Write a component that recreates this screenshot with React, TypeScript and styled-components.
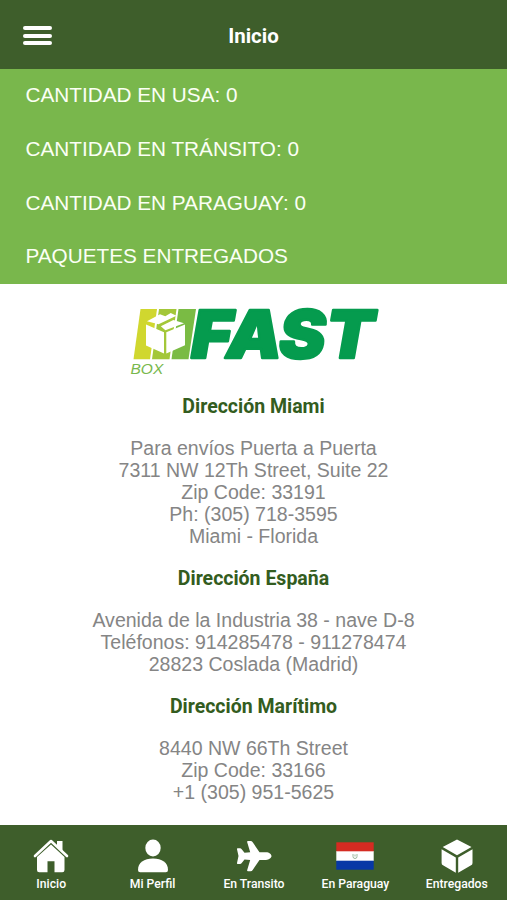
import React from "react";
import styled, { createGlobalStyle } from "styled-components";

const Global = createGlobalStyle`
  *, *::before, *::after { box-sizing: border-box; }
  html, body, #root { height: 100%; }
  body { margin: 0; background: #fff; font-family: "Liberation Sans", Arial, sans-serif; }
`;

const Screen = styled.div`
  display: flex;
  flex-direction: column;
  height: 900px;
  width: 100%;
  overflow: hidden;
`;

const Header = styled.header`
  display: grid;
  grid-template-columns: 74px 1fr 74px;
  align-items: center;
  flex: none;
  height: 69px;
  padding-top: 2px;
  background: #3e5e2b;
`;

const MenuButton = styled.button`
  display: flex;
  flex-direction: column;
  gap: 3.6px;
  width: 29px;
  margin-left: 22.5px;
  padding: 0;
  border: 0;
  background: none;
`;

const MenuBar = styled.span`
  height: 4px;
  border-radius: 2px;
  background: #fff;
`;

const Title = styled.h1`
  margin: 0;
  color: #fff;
  font: 700 20.5px/24px Roboto, sans-serif;
  text-align: center;
`;

const Summary = styled.ul`
  flex: none;
  height: 215px;
  margin: 0;
  padding: 0 0 0 25.4px;
  list-style: none;
  background: #79b74c;
`;

const SummaryItem = styled.li`
  height: 53.8px;
  color: #fbfff5;
  font-size: 20.75px;
  line-height: 52.6px;
`;

const Main = styled.main`
  display: flex;
  flex: 1;
  flex-direction: column;
  align-items: center;
`;

const Logo = styled.svg`
  display: block;
  flex: none;
  width: 265px;
  height: 85px;
  margin: 11px 0 1px;
  overflow: visible;
`;

const Address = styled.section`
  flex: none;
  margin: 14px 0 6px;
  text-align: center;
`;

const Heading = styled.h2`
  margin: 0 0 18px;
  color: #335c20;
  font: 700 19.5px/24px Roboto, sans-serif;
`;

const Line = styled.p`
  margin: 0;
  color: #858585;
  font-size: 19.55px;
  line-height: 22px;
`;

const Tabs = styled.nav`
  display: grid;
  grid-template-columns: repeat(5, 1fr);
  flex: none;
  height: 75px;
  background: #3e5e2b;
`;

const Tab = styled.a`
  display: flex;
  flex-direction: column;
  align-items: center;
  padding: 12px 0 0 1px;
  color: #fff;
  font: 500 12.2px/14px Roboto, sans-serif;
  white-space: nowrap;
`;

const TabIcon = styled.svg`
  width: 40px;
  height: 40px;
  flex: none;
  fill: #fff;
`;

const counts = ["CANTIDAD EN USA: 0", "CANTIDAD EN TRÁNSITO: 0", "CANTIDAD EN PARAGUAY: 0", "PAQUETES ENTREGADOS"];

const addresses = [
  {
    title: "Dirección Miami",
    lines: ["Para envíos Puerta a Puerta", "7311 NW 12Th Street, Suite 22", "Zip Code: 33191", "Ph: (305) 718-3595", "Miami - Florida"],
  },
  {
    title: "Dirección España",
    lines: ["Avenida de la Industria 38 - nave D-8", "Teléfonos: 914285478 - 911278474", "28823 Coslada (Madrid)"],
  },
  {
    title: "Dirección Marítimo",
    lines: ["8440 NW 66Th Street", "Zip Code: 33166", "+1 (305) 951-5625"],
  },
];

const tabs = [
  {
    label: "Inicio",
    icon: (
      <>
        <path d="M4 19 20 4 36 19" fill="none" stroke="#fff" strokeWidth="2.6" strokeLinecap="round" strokeLinejoin="round" />
        <path d="M26 4h5.500v10.500l-5.500-5z" />
        <path d="M20 7.500 33.500 20V33q0 2.200-2.200 2.200H23.500V24.200h-7v11H8.200Q6 35.200 6 33V20z" />
      </>
    ),
  },
  {
    label: "Mi Perfil",
    icon: (
      <>
        <ellipse cx="20" cy="11" rx="7.700" ry="8.400" />
        <path d="M5 33C5 25.500 11 21.500 20 21.500S35 25.500 35 33q0 2.200-2.200 2.200H7.200Q5 35.200 5 33z" />
      </>
    ),
  },
  {
    label: "En Transito",
    icon: (
      <path d="M14 4h2.600q1.300 0 2.100 1.200L25.500 15.300h6.500c3.200 0 5.500 2.100 5.500 3.800S35.200 22.900 32 22.900h-6.500L18.700 33q-.8 1.200-2.100 1.200H14q-1.200 0-.8-1.200l3-10.100-5.700-.4-3 3.800q-.6.600-1.400.600H3.700q-1 0-.7-1l1.500-6.800L3 12.300q-.3-1 .7-1h2.400q.8 0 1.400.6l3 3.800 5.700-.4-3-10.100Q12.800 4 14 4z" />
    ),
  },
  {
    label: "En Paraguay",
    icon: (
      <>
        <rect x="1.300" y="14" width="37.400" height="10" fill="#fff" />
        <rect x="1.300" y="5.300" width="37.400" height="9" fill="#d52b22" />
        <rect x="1.300" y="23.700" width="37.400" height="9" fill="#0738a6" />
        <path d="M18 17v2.500q0 2 2 2t2-2V17M20 17.500v2" fill="none" stroke="#9cb89c" strokeWidth="1" />
      </>
    ),
  },
  {
    label: "Entregados",
    icon: (
      <path d="M20 2.500 34.500 10 20 18.300 5.700 10zM4.600 12.200l14.200 8.200v15.400L6 28.300q-1.400-.8-1.400-2.400zM35.500 12.200v13.700q0 1.600-1.400 2.400l-12.900 7.500V20.400z" />
    ),
  },
];

export default function App() {
  return (
    <Screen>
      <Global />
      <Header>
        <MenuButton aria-label="Menú">
          <MenuBar />
          <MenuBar />
          <MenuBar />
        </MenuButton>
        <Title>Inicio</Title>
      </Header>
      <Summary>
        {counts.map((text) => (
          <SummaryItem key={text}>{text}</SummaryItem>
        ))}
      </Summary>
      <Main>
        <Logo viewBox="120 295 265 85" role="img" aria-label="Fast Box">
          <path d="M139.500 309H156l-7 50.200h-16.500z" fill="#d0d72f" />
          <path d="M158 309h17.500l-7 50.200H151z" fill="#a3c739" />
          <path d="M177.500 309H195l-7.500 50.200h-17z" fill="#7abb44" />
          <g fill="#fff">
            <path d="M145 324.500l18 7.700v21.300l-18-8zM165.300 332.200l18.700-7.700v20.700l-18.700 8.300z" />
            <path d="M146 321.300l13-7 5.300 2 5.400-3.300 5.800 2.800-18 8.400z" />
            <path d="M159.800 326.300l12.600-6.200 10.600 3.200-18.600 7z" />
          </g>
          <text
            transform="scale(1.06 1)"
            x="179.500 212.800 262.300 306.500"
            y="357.900"
            fill="#059b4e"
            stroke="#059b4e"
            strokeWidth="2.400"
            strokeLinejoin="round"
            fontFamily="Inter, sans-serif"
            fontWeight="900"
            fontStyle="italic"
            fontSize="66"
          >
            FAST
          </text>
          <text x="129.500" y="374" fill="#78b84d" fontFamily="Liberation Sans, sans-serif" fontStyle="italic" fontSize="15.500">
            BOX
          </text>
        </Logo>
        {addresses.map((address) => (
          <Address key={address.title}>
            <Heading>{address.title}</Heading>
            {address.lines.map((line) => (
              <Line key={line}>{line}</Line>
            ))}
          </Address>
        ))}
      </Main>
      <Tabs>
        {tabs.map((tab) => (
          <Tab key={tab.label}>
            <TabIcon viewBox="0 0 40 40" aria-hidden="true">
              {tab.icon}
            </TabIcon>
            {tab.label}
          </Tab>
        ))}
      </Tabs>
    </Screen>
  );
}
